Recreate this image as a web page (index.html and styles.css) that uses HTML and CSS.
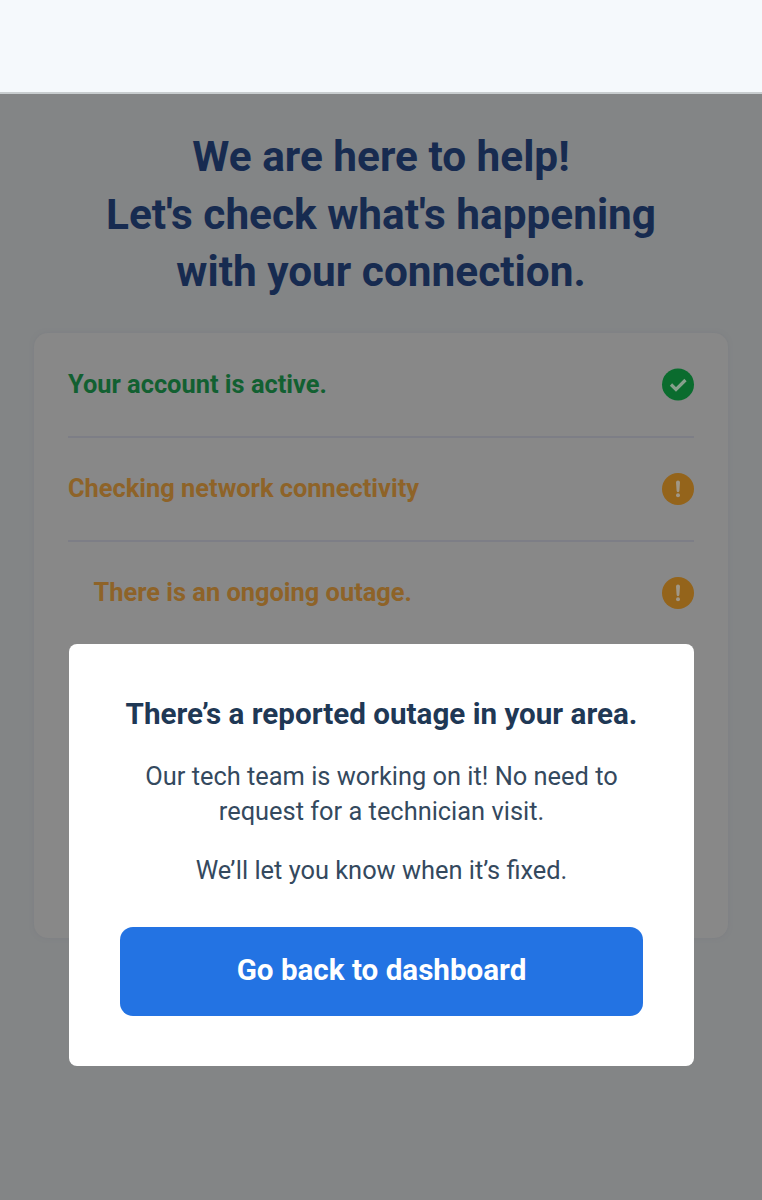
FILE: index.html
```html
<!DOCTYPE html>
<html lang="en">
<head>
<meta charset="utf-8">
<title>Connection check</title>
<link rel="stylesheet" href="styles.css">
</head>
<body>
<header class="topbar"></header>
<main class="page">
  <h1 class="title">We are here to help!<br>Let's check what's happening<br>with your connection.</h1>
  <section class="card">
    <div class="row ok"><span class="label">Your account is active.</span>
      <svg class="icon" viewBox="0 0 32 32"><circle cx="16" cy="15.5" r="16" fill="#0a6c2e"/><path d="M9 15.5l5 5 9.5-9.5" fill="none" stroke="#86a08c" stroke-width="3.2"/></svg></div>
    <div class="row warn"><span class="label">Checking network connectivity</span>
      <svg class="icon" viewBox="0 0 32 32"><circle cx="16" cy="16" r="16" fill="#94641b"/><path d="M14 9.4a2 2 0 0 1 4 0l-.6 8.4a1.4 1.4 0 0 1-2.8 0z" fill="#a09787"/><circle cx="16" cy="22.2" r="2" fill="#a09787"/></svg></div>
    <div class="row warn sub"><span class="label">There is an ongoing outage.</span>
      <svg class="icon" viewBox="0 0 32 32"><circle cx="16" cy="16" r="16" fill="#94641b"/><path d="M14 9.4a2 2 0 0 1 4 0l-.6 8.4a1.4 1.4 0 0 1-2.8 0z" fill="#a09787"/><circle cx="16" cy="22.2" r="2" fill="#a09787"/></svg></div>
  </section>
  <div class="modal" role="dialog">
    <h2 class="modal-title">There’s a reported outage in your area.</h2>
    <p class="text">Our tech team is working on it! No need to<br>request for a technician visit.</p>
    <p class="text second">We’ll let you know when it’s fixed.</p>
    <button class="button">Go back to dashboard</button>
  </div>
</main>
</body>
</html>
```
FILE: styles.css
```css
* { box-sizing: border-box; }
body { margin: 0; font-family: Roboto, sans-serif; background: #838586; }
.topbar { height: 94px; background: #f5f9fc; border-bottom: 2px solid #c8cdcf; }
.page { position: relative; height: 1106px; padding: 34px 34px 0; background: #838586; overflow: hidden; }
.title { margin: 0; text-align: center; font-size: 42.35px; line-height: 57.5px; font-weight: 700; color: #172b50; }
.card { margin-top: 32.5px; height: 605px; padding: 0.5px 34px 0; background: #888; border-radius: 14px; box-shadow: 0 0 4px #7c7e83; }
.row { height: 104px; display: flex; align-items: center; justify-content: space-between; font-size: 25.4px; font-weight: 700; border-bottom: 2px solid #7d7e86; }
.row.sub { height: 102px; padding-left: 25.5px; border-bottom: 0; }
.label { padding-bottom: 2px; }
.ok { color: #126031; }
.warn { color: #8e6328; }
.icon { width: 32px; height: 32px; overflow: visible; }
.modal { position: absolute; left: 69px; top: 550px; width: 625px; height: 422px; padding: 50px 51px 0; background: #fff; border-radius: 8px; text-align: center; }
.modal-title { display: flex; justify-content: center; margin: 0; font-size: 29.6px; line-height: 40px; color: #1f3855; white-space: nowrap; }
.text { margin: 25px 0 0; font-size: 25.4px; line-height: 35px; color: #34495e; }
.text.second { margin-top: 24px; }
.button { display: block; width: 523px; height: 89px; margin-top: 39px; padding: 0 0 4px; border: 0; border-radius: 13px; background: #2373e3; color: #fff; font: 700 29.6px Roboto, sans-serif; }
```
